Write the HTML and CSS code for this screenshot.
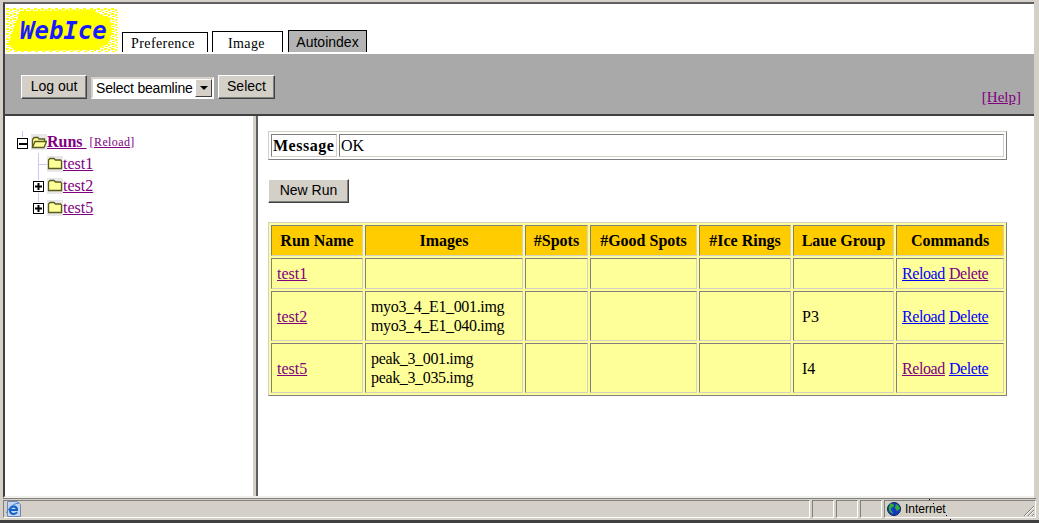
FILE: index.html
```html
<!DOCTYPE html>
<html lang="en">
<head>
    <meta charset="UTF-8">
    <meta name="viewport" content="width=device-width, initial-scale=1.0">
    <title>WebIce</title>
    <link rel="stylesheet" href="styles.css">
</head>
<body>
<div class="page">
    <div class="top_frame">
        <div class="logo_row">
            <svg class="logo" width="112" height="44" viewBox="0 0 112 44">
                <defs>
                    <pattern id="speckle" width="7" height="5" patternUnits="userSpaceOnUse">
                        <rect width="7" height="5" fill="#fff"/>
                        <rect x="0" y="0" width="3" height="2" fill="#ffff00"/>
                        <rect x="4" y="1" width="2" height="2" fill="#ffff00"/>
                        <rect x="1" y="3" width="3" height="1" fill="#ffff00"/>
                        <rect x="5" y="4" width="2" height="1" fill="#ffff00"/>
                    </pattern>
                </defs>
                <rect width="112" height="44" fill="url(#speckle)"/>
                <path d="M14 3 L88 2 L92 6 L104 10 L106 24 L102 36 L90 42 L10 43 L2 36 L8 20 Z" fill="#ffff00"/>
                <text class="logo_text" x="14" y="31">WebIce</text>
            </svg>
            <a class="tab tab_pref" href="#">Preference</a>
            <a class="tab tab_image" href="#">Image</a>
            <a class="tab tab_auto" href="#">Autoindex</a>
        </div>
        <div class="tool_band">
            <button class="btn btn_logout">Log out</button>
            <div class="select_box">
                <span class="select_text">Select beamline</span>
                <span class="select_arrow"></span>
            </div>
            <button class="btn btn_select">Select</button>
            <a class="help_link" href="#">[Help]</a>
        </div>
    </div>

    <div class="main_frames">
        <div class="tree_frame">
            <div class="tree_row">
                <svg class="tree_cell" width="16" height="22" viewBox="0 0 16 22">
                    <path d="M7.500 0V6" stroke="#c8c8ff"/>
                    <rect x="2.500" y="7.500" width="10" height="10" fill="#fff" stroke="#000"/>
                    <path d="M4 13h8" stroke="#000" stroke-width="2"/>
                </svg>
                <svg class="tree_cell folder" width="16" height="22" viewBox="0 0 16 22">
                    <rect y="3" width="16" height="16" fill="#e8e8e8"/>
                    <path d="M1.500 16.500V8.500L3 6.500H7L8 8H13.500V10" fill="#ffff99" stroke="#5a5a20" stroke-width="1.300"/>
                    <path d="M1.500 16.500L4 10.500H15.500L13 16.500Z" fill="#ffff99" stroke="#5a5a20" stroke-width="1.300"/>
                </svg>
                <a class="runs_link" href="#">Runs&nbsp;</a>
                <a class="reload_small" href="#">[Reload]</a>
            </div>
            <div class="tree_row">
                <span class="tree_indent"></span>
                <svg class="tree_cell" width="16" height="22" viewBox="0 0 16 22">
                    <path d="M7.500 0V11.500H16" stroke="#c8c8ff" fill="none"/>
                    <path d="M7.500 11.500V22" stroke="#c8c8ff"/>
                </svg>
                <svg class="tree_cell folder" width="16" height="22" viewBox="0 0 16 22">
                    <rect y="3" width="16" height="16" fill="#e8e8e8"/>
                    <path d="M1.500 15.500V7L3 5.500H7L8.500 7H13.500L14.500 8V15.500Z" fill="#ffff99" stroke="#5a5a20" stroke-width="1.300"/>
                </svg>
                <a class="tree_link" href="#">test1</a>
            </div>
            <div class="tree_row">
                <span class="tree_indent"></span>
                <svg class="tree_cell" width="16" height="22" viewBox="0 0 16 22">
                    <path d="M7.500 0V5M7.500 18V22" stroke="#c8c8ff"/>
                    <rect x="2.500" y="6.500" width="10" height="10" fill="#fff" stroke="#000"/>
                    <path d="M4 11.500h7M7.500 8v7" stroke="#000" stroke-width="2"/>
                </svg>
                <svg class="tree_cell folder" width="16" height="22" viewBox="0 0 16 22">
                    <rect y="3" width="16" height="16" fill="#e8e8e8"/>
                    <path d="M1.500 15.500V7L3 5.500H7L8.500 7H13.500L14.500 8V15.500Z" fill="#ffff99" stroke="#5a5a20" stroke-width="1.300"/>
                </svg>
                <a class="tree_link" href="#">test2</a>
            </div>
            <div class="tree_row">
                <span class="tree_indent"></span>
                <svg class="tree_cell" width="16" height="22" viewBox="0 0 16 22">
                    <path d="M7.500 0V5" stroke="#c8c8ff"/>
                    <rect x="2.500" y="6.500" width="10" height="10" fill="#fff" stroke="#000"/>
                    <path d="M4 11.500h7M7.500 8v7" stroke="#000" stroke-width="2"/>
                </svg>
                <svg class="tree_cell folder" width="16" height="22" viewBox="0 0 16 22">
                    <rect y="3" width="16" height="16" fill="#e8e8e8"/>
                    <path d="M1.500 15.500V7L3 5.500H7L8.500 7H13.500L14.500 8V15.500Z" fill="#ffff99" stroke="#5a5a20" stroke-width="1.300"/>
                </svg>
                <a class="tree_link" href="#">test5</a>
            </div>
        </div>

        <div class="content_frame">
            <table class="message_table">
                <tr>
                    <th class="message_label">Message</th>
                    <td class="message_value">OK</td>
                </tr>
            </table>

            <button class="btn btn_new">New Run</button>

            <table class="runs_table">
                <colgroup>
                    <col class="col_name">
                    <col class="col_images">
                    <col class="col_spots">
                    <col class="col_good">
                    <col class="col_ice">
                    <col class="col_laue">
                    <col class="col_cmd">
                </colgroup>
                <tr class="head_row">
                    <th>Run Name</th>
                    <th>Images</th>
                    <th>#Spots</th>
                    <th>#Good Spots</th>
                    <th>#Ice Rings</th>
                    <th>Laue Group</th>
                    <th>Commands</th>
                </tr>
                <tr class="short_row">
                    <td><a class="visited" href="#">test1</a></td>
                    <td></td>
                    <td></td>
                    <td></td>
                    <td></td>
                    <td></td>
                    <td class="cmd_cell"><a href="#">Reload</a> <a class="visited" href="#">Delete</a></td>
                </tr>
                <tr class="tall_row">
                    <td><a class="visited" href="#">test2</a></td>
                    <td class="images_cell">myo3_4_E1_001.img<br>myo3_4_E1_040.img</td>
                    <td></td>
                    <td></td>
                    <td></td>
                    <td class="laue_cell">P3</td>
                    <td class="cmd_cell"><a href="#">Reload</a> <a href="#">Delete</a></td>
                </tr>
                <tr class="tall_row">
                    <td><a class="visited" href="#">test5</a></td>
                    <td class="images_cell">peak_3_001.img<br>peak_3_035.img</td>
                    <td></td>
                    <td></td>
                    <td></td>
                    <td class="laue_cell">I4</td>
                    <td class="cmd_cell"><a class="visited" href="#">Reload</a> <a href="#">Delete</a></td>
                </tr>
            </table>
        </div>
    </div>
</div>

<div class="status_bar">
    <div class="status_panel status_main">
        <svg width="18" height="18" viewBox="0 0 18 18">
            <path d="M2.500 1.500H12L15.500 4.500V16.500H2.500Z" fill="#c4d4f0" stroke="#7088b8"/>
            <path d="M5 10H12C12 7.500 10.500 6.500 8.800 6.500C6.500 6.500 5 8 5 10.300C5 12.500 6.500 14 8.800 14C10.200 14 11.300 13.400 12 12.300" fill="none" stroke="#1060c0" stroke-width="2"/>
            <path d="M1.500 13C4 7 9 3.500 14 3" fill="none" stroke="#3080d8"/>
        </svg>
    </div>
    <div class="status_panel status_small"></div>
    <div class="status_panel status_small"></div>
    <div class="status_panel status_small"></div>
    <div class="status_panel status_zone">
        <svg width="16" height="16" viewBox="0 0 16 16">
            <circle cx="8" cy="8" r="6.500" fill="#1438c8" stroke="#102050" stroke-width="1"/>
            <path d="M4 3C6 2 8 3 8 5C7 7 5 6 5 8C5 10 7 10 7 13C4 12 2 9 3 6Z" fill="#30b030"/>
            <path d="M10 3L13 5L14 8L11 10L9 7Z" fill="#30b030"/>
        </svg>
        <span class="zone_text">Internet</span>
        <svg class="grip" width="12" height="12" viewBox="0 0 12 12">
            <path d="M11 1L1 11M11 5L5 11M11 9L9 11" stroke="#808080" fill="none"/>
            <path d="M11 2L2 11M11 6L6 11M11 10L10 11" stroke="#fff" fill="none"/>
        </svg>
    </div>
</div>
<svg class="specks" width="30" height="24" viewBox="0 0 30 24">
    <path d="M0 0h1v1H0zM4 4h1v1H4zM17 16h1v1h-1zM21 20h1v1h-1z" fill="#000"/>
</svg>
</body>
</html>
```

FILE: styles.css
```css
html, body {
    margin: 0;
    height: 523px;
    overflow: hidden;
}
body {
    background-color: #d4d0c8;
    font-family: "Liberation Serif", serif;
    font-size: 16px;
    display: flex;
    flex-direction: column;
    padding: 2px 3px 3px 3px;
    box-sizing: border-box;
    box-shadow: inset 0 -3px 0 #404040;
    position: relative;
}
a {
    color: #0000ff;
}
a.visited {
    color: #800080;
}

/* page area */
.page {
    flex: 1;
    min-height: 0;
    display: flex;
    flex-direction: column;
    margin: 0 2px 0 0;
    border-top: 2px solid #606060;
    border-left: 2px solid #404040;
    border-bottom: 2px solid #f0efea;
    background-color: #fff;
}
.top_frame {
    flex: none;
}
.logo_row {
    height: 50px;
    display: flex;
    align-items: flex-end;
    box-sizing: border-box;
    padding-bottom: 2px;
    background-color: #fff;
}
.logo {
    margin: 0 4px 0 1px;
}
.logo_text {
    font-family: "DejaVu Sans Mono", monospace;
    font-size: 24px;
    font-weight: bold;
    font-style: italic;
    fill: #1a1aff;
}
.tab {
    box-sizing: border-box;
    border: 1px solid #000;
    border-bottom: 0;
    color: #000;
    text-decoration: none;
    font-size: 14px;
    text-align: center;
    letter-spacing: 0.4px;
}
.tab_pref {
    width: 86px;
    height: 20px;
    line-height: 22px;
    padding-right: 4px;
    margin-right: 4px;
}
.tab_image {
    width: 71px;
    height: 21px;
    line-height: 23px;
    padding-right: 2px;
    margin-right: 5px;
}
.tab_auto {
    width: 79px;
    height: 22px;
    line-height: 23px;
    background-color: #b4b4b4;
    font-family: "Liberation Sans", sans-serif;
    letter-spacing: 0;
}
.tool_band {
    height: 62px;
    box-sizing: border-box;
    background-color: #a9a9a9;
    border-bottom: 2px solid #404040;
    display: flex;
    align-items: flex-start;
    padding: 21px 13px 0 16px;
}
.btn {
    box-sizing: border-box;
    height: 24px;
    padding: 0 0 2px 0;
    background-color: #d4d0c8;
    border: 1px solid;
    border-color: #fff #404040 #404040 #fff;
    box-shadow: inset -1px -1px 0 #808080;
    font-family: "Liberation Sans", sans-serif;
    font-size: 14px;
    color: #000;
}
.btn_logout {
    width: 66px;
}
.btn_select {
    width: 57px;
}
.btn_new {
    display: block;
    width: 81px;
    margin: 19px 0 19px 10px;
}
.select_box {
    box-sizing: border-box;
    width: 123px;
    height: 22px;
    margin: 2px 4px 0 4px;
    background-color: #fff;
    border: 2px solid #fff;
    border-top-color: #d4d0c8;
    border-left-color: #d4d0c8;
    display: flex;
    align-items: center;
    justify-content: space-between;
    font-family: "Liberation Sans", sans-serif;
    font-size: 14px;
    padding-left: 3px;
    white-space: nowrap;
}
.select_text {
    letter-spacing: -0.2px;
}
.select_arrow {
    box-sizing: border-box;
    width: 17px;
    height: 18px;
    flex: none;
    background-color: #d4d0c8;
    border: 1px solid;
    border-color: #fff #404040 #404040 #fff;
    display: flex;
    align-items: center;
    justify-content: center;
}
.select_arrow::after {
    content: "";
    border: 4px solid transparent;
    border-top: 4px solid #000;
    border-bottom: 0;
}
.help_link {
    margin: 14px 0 0 auto;
    color: #800080;
    font-size: 15px;
}

/* frames */
.main_frames {
    flex: 1;
    min-height: 0;
    display: flex;
    background-color: #d4d0c8;
}
.tree_frame {
    width: 248px;
    flex: none;
    box-sizing: border-box;
    padding: 15px 0 0 10px;
    background-color: #fff;
}
.tree_row {
    display: flex;
    height: 22px;
    align-items: flex-start;
}
.tree_cell {
    display: block;
    flex: none;
}
.tree_indent {
    width: 16px;
    flex: none;
}
.tree_link {
    color: #800080;
    font-size: 16px;
    line-height: 22px;
}
.runs_link {
    color: #800080;
    font-weight: bold;
    font-size: 16px;
    line-height: 22px;
}
.reload_small {
    color: #800080;
    font-size: 12px;
    line-height: 22px;
    margin-left: 3px;
    letter-spacing: 0.4px;
}
.content_frame {
    flex: 1;
    min-width: 0;
    background-color: #fff;
    margin-left: 3px;
    border-left: 2px solid #606060;
    padding-top: 15px;
}

/* tables */
table {
    border-collapse: separate;
    border-spacing: 2px;
    border: 1px solid;
    border-color: #d4d0c8 #808080 #808080 #d4d0c8;
    margin-left: 10px;
    table-layout: fixed;
    width: 739px;
}
th, td {
    border: 1px solid;
    border-color: #808080 #d4d0c8 #d4d0c8 #808080;
    padding: 0 5px;
    box-sizing: border-box;
}
.message_table th, .message_table td {
    padding: 1px;
    height: 23px;
    text-align: left;
}
.message_label {
    width: 66px;
    letter-spacing: 0.5px;
}
.runs_table {
    background-color: #ffff99;
    line-height: 19px;
}
.runs_table th {
    background-color: #ffcc00;
    text-align: center;
    padding: 0;
    white-space: nowrap;
}
.head_row th, .short_row td {
    height: 31px;
}
.tall_row td {
    height: 50px;
}
.images_cell {
    letter-spacing: -0.35px;
}
.laue_cell {
    padding-left: 8px;
}
.cmd_cell a {
    letter-spacing: -0.4px;
}
.col_name { width: 92px; }
.col_images { width: 158px; }
.col_spots { width: 63px; }
.col_good { width: 107px; }
.col_ice { width: 92px; }
.col_laue { width: 101px; }
.col_cmd { width: 108px; }

/* status bar */
.status_bar {
    flex: none;
    height: 22px;
    display: flex;
    box-sizing: border-box;
    padding: 1px 0 2px 0;
    font-family: "Liberation Sans", sans-serif;
    font-size: 12px;
    border-top: 1px solid #808080;
}
.status_panel {
    box-sizing: border-box;
    border: 1px solid;
    border-color: #808080 #fff #fff #808080;
    margin-right: 2px;
    display: flex;
    align-items: center;
}
.status_main {
    width: 807px;
    padding-left: 1px;
}
.status_small {
    width: 22px;
}
.status_zone {
    flex: 1;
    margin-right: 0;
    padding-left: 1px;
}
.zone_text {
    margin-left: 3px;
}
.grip {
    margin-left: auto;
    align-self: flex-end;
}
.specks {
    position: absolute;
    left: 929px;
    top: 499px;
}
```
